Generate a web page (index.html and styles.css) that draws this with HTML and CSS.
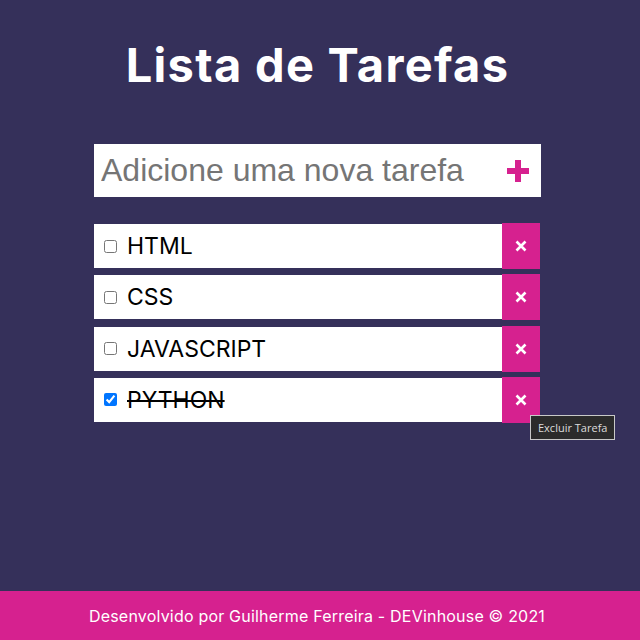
FILE: index.html
```html
<!DOCTYPE html>
<html lang="pt-BR">
<head>
<meta charset="utf-8">
<title>Lista de Tarefas</title>
<link rel="stylesheet" href="styles.css">
</head>
<body>
<main class="main">
  <h1 class="title">Lista de Tarefas</h1>
  <form class="add-form">
    <input class="add-input" type="text" placeholder="Adicione uma nova tarefa">
    <button class="add-btn" type="button" aria-label="Adicionar">
      <svg width="22" height="22" viewBox="0 0 22 22"><rect x="8" y="0" width="6" height="22" fill="#d6218f"/><rect x="0" y="8" width="22" height="6" fill="#d6218f"/></svg>
    </button>
  </form>
  <ul class="list">
    <li class="item"><input class="check" type="checkbox"><span class="label">HTML</span><button class="del" type="button"><svg width="12" height="12" viewBox="0 0 12 12"><path d="M1.5 1.5L10.5 10.5M10.5 1.5L1.5 10.5" stroke="#fff" stroke-width="2.6"/></svg></button></li>
    <li class="item"><input class="check" type="checkbox"><span class="label">CSS</span><button class="del" type="button"><svg width="12" height="12" viewBox="0 0 12 12"><path d="M1.5 1.5L10.5 10.5M10.5 1.5L1.5 10.5" stroke="#fff" stroke-width="2.6"/></svg></button></li>
    <li class="item"><input class="check" type="checkbox"><span class="label">JAVASCRIPT</span><button class="del" type="button"><svg width="12" height="12" viewBox="0 0 12 12"><path d="M1.5 1.5L10.5 10.5M10.5 1.5L1.5 10.5" stroke="#fff" stroke-width="2.6"/></svg></button></li>
    <li class="item"><input class="check" type="checkbox" checked><span class="label done">PYTHON</span><button class="del" type="button"><svg width="12" height="12" viewBox="0 0 12 12"><path d="M1.5 1.5L10.5 10.5M10.5 1.5L1.5 10.5" stroke="#fff" stroke-width="2.6"/></svg></button><span class="tooltip">Excluir Tarefa</span></li>
  </ul>
</main>
<footer class="footer">Desenvolvido por Guilherme Ferreira - DEVinhouse © 2021</footer>
</body>
</html>
```
FILE: styles.css
```css
* { box-sizing: border-box; }
html, body { margin: 0; padding: 0; }
body {
  height: 640px;
  display: flex;
  flex-direction: column;
  background: #35305a;
  font-family: Inter, "Noto Sans", sans-serif;
}
.main {
  flex: 1;
  width: 447px;
  margin-left: 94px;
}
.title {
  margin: 0;
  padding-top: 37px;
  width: 447px;
  text-align: center;
  color: #fff;
  font-size: 47px;
  font-weight: 700;
  line-height: 56px;
  letter-spacing: 1.3px;
}
.add-form {
  margin-top: 51px;
  display: flex;
  height: 53px;
  background: #fff;
}
.add-input {
  flex: 1;
  width: 0;
  min-width: 0;
  border: 0;
  outline: 0;
  padding: 0 0 0 7px;
  font-family: "Liberation Sans", Arial, sans-serif;
  font-size: 32px;
  color: #333;
  background: transparent;
}
.add-input::placeholder { color: #757575; }
.add-btn {
  flex: 0 0 auto;
  width: 48px;
  border: 0;
  background: transparent;
  padding: 0 0 0 2px;
  display: flex;
  align-items: center;
  justify-content: center;
}
.list {
  list-style: none;
  margin: 27px 0 0;
  padding: 0;
  display: flex;
  flex-direction: column;
  gap: 7.3px;
}
.item {
  position: relative;
  display: flex;
  align-items: center;
  height: 44px;
  width: 446px;
  background: #fff;
  padding-left: 6px;
}
.check {
  width: 13px;
  height: 13px;
  margin: 0 10px 0 4px;
}
.label {
  flex: 1;
  font-size: 23px;
  color: #000;
}
.done { text-decoration: line-through; }
.del {
  width: 38px;
  height: 46px;
  margin: -1px 0;
  border: 0;
  padding: 0;
  background: #d6218f;
  display: flex;
  align-items: center;
  justify-content: center;
}
.tooltip {
  position: absolute;
  left: 436px;
  top: 37px;
  height: 25px;
  padding: 0 7px;
  display: flex;
  align-items: center;
  background: #2b2b2b;
  border: 1px solid #c8c8c8;
  color: #dcdcdc;
  font-family: "Open Sans", sans-serif;
  font-size: 11px;
  white-space: nowrap;
}
.footer {
  height: 49px;
  background: #d6218f;
  color: #fff;
  font-size: 16px;
  letter-spacing: 0.2px;
  display: flex;
  align-items: center;
  justify-content: center;
  padding-right: 6px;
}
```
